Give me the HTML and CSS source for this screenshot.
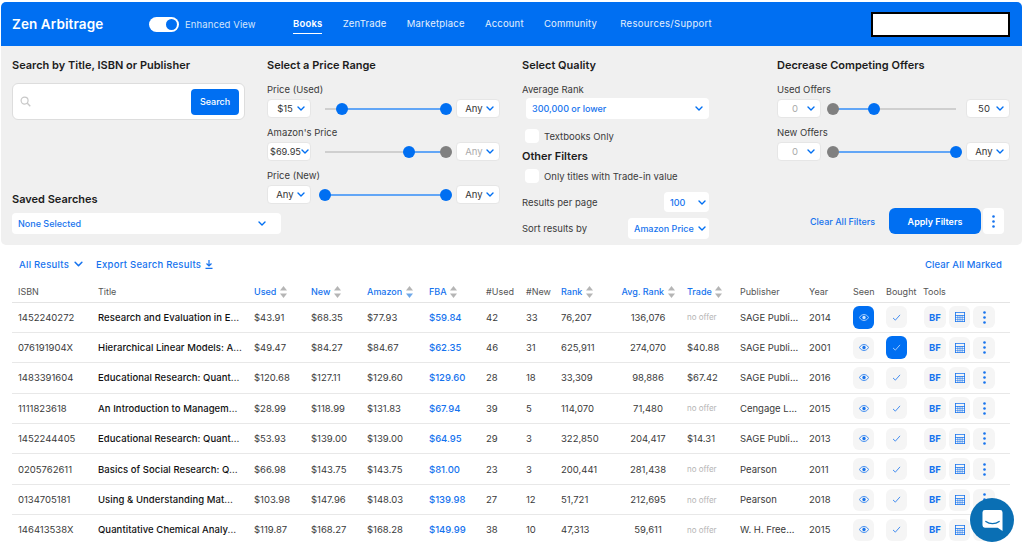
FILE: index.html
```html
<!DOCTYPE html>
<html lang="en">
<head>
<meta charset="utf-8">
<title>Zen Arbitrage</title>
<link rel="stylesheet" href="styles.css">
</head>
<body>
<svg class="defs" width="0" height="0" aria-hidden="true">
  <symbol id="chev" viewBox="0 0 8 5"><path d="M1 1l3 3 3-3" fill="none" stroke="currentColor" stroke-width="1.4" stroke-linecap="round" stroke-linejoin="round"/></symbol>
  <symbol id="eye" viewBox="0 0 12 8"><path d="M.5 4C2 1.600 3.800.5 6 .5S10 1.600 11.500 4C10 6.400 8.200 7.500 6 7.500S2 6.400.5 4z" fill="none" stroke="currentColor"/><circle cx="6" cy="4" r="2" fill="currentColor"/></symbol>
  <symbol id="check" viewBox="0 0 10 8"><path d="M1 4.500l2.700 2.500L9 1" fill="none" stroke="currentColor" stroke-width=".9"/></symbol>
  <symbol id="calc" viewBox="0 0 10 10"><path d="M0 0h10v10H0zM.8 .8v2.200h8.400V.8zM.8 3.800v1.400h1.800V3.800zM3.200 3.800v1.400h1.500V3.800zM5.300 3.800v1.400h1.500V3.800zM7.400 3.800v1.400h1.800V3.800zM.8 5.800v1.400h1.800V5.800zM3.200 5.800v1.400h1.500V5.800zM5.300 5.800v1.400h1.500V5.800zM7.400 5.800v1.400h1.800V5.800zM.8 7.800v1.400h1.800V7.800zM3.200 7.800v1.400h1.500V7.800zM5.300 7.800v1.400h1.500V7.800zM7.400 7.800v1.400h1.800V7.800z" fill="currentColor" fill-rule="evenodd"/></symbol>
  <symbol id="dots" viewBox="0 0 3 13"><circle cx="1.500" cy="1.500" r="1.300" fill="currentColor"/><circle cx="1.500" cy="6.500" r="1.300" fill="currentColor"/><circle cx="1.500" cy="11.500" r="1.300" fill="currentColor"/></symbol>
  <symbol id="sort" viewBox="0 0 7 12"><path d="M3.500 0L7 4.500H0z" fill="#b5b5b5"/><path d="M0 7.500h7L3.500 12z" fill="#b5b5b5"/></symbol>
  <symbol id="sort-down" viewBox="0 0 7 12"><path d="M3.500 0L7 4.500H0z" fill="#b5b5b5"/><path d="M0 7.500h7L3.500 12z" fill="#6fa8e8"/></symbol>
</svg>

<header class="topbar">
  <div class="logo">Zen Arbitrage</div>
  <div class="toggle"><span class="knob"></span></div>
  <span class="toggle-label">Enhanced View</span>
  <nav class="nav">
    <a class="nav-link active">Books</a>
    <a class="nav-link">ZenTrade</a>
    <a class="nav-link">Marketplace</a>
    <a class="nav-link">Account</a>
    <a class="nav-link">Community</a>
    <a class="nav-link nav-last">Resources/Support</a>
  </nav>
  <div class="user-box"></div>
</header>

<section class="filters">
  <div class="col col-search">
    <h2 class="heading">Search by Title, ISBN or Publisher</h2>
    <div class="search-box">
      <svg class="search-icon" viewBox="0 0 12 12"><circle cx="5" cy="5" r="3.800" fill="none" stroke="#c8c8c8" stroke-width="1.300"/><path d="M8 8l3.200 3.200" stroke="#c8c8c8" stroke-width="1.500"/></svg>
      <button class="search-btn">Search</button>
    </div>
    <h2 class="heading saved-heading">Saved Searches</h2>
    <div class="sel sel-blue sel-saved"><span>None Selected</span><svg class="chev"><use href="#chev"/></svg></div>
  </div>

  <div class="col">
    <h2 class="heading">Select a Price Range</h2>
    <div class="label first">Price (Used)</div>
    <div class="range">
      <div class="sel sel-small"><span>$15</span><svg class="chev"><use href="#chev"/></svg></div>
      <div class="slider"><div class="track"><div class="fill" style="left:14%;right:0"></div><i class="handle" style="left:14%"></i><i class="handle" style="left:100%"></i></div></div>
      <div class="sel sel-small"><span>Any</span><svg class="chev"><use href="#chev"/></svg></div>
    </div>
    <div class="label">Amazon's Price</div>
    <div class="range">
      <div class="sel sel-small sel-tight"><span>$69.95</span><svg class="chev"><use href="#chev"/></svg></div>
      <div class="slider"><div class="track"><div class="fill" style="left:69.500%;right:0"></div><i class="handle" style="left:69.500%"></i><i class="handle off" style="left:100%"></i></div></div>
      <div class="sel sel-small sel-muted"><span>Any</span><svg class="chev"><use href="#chev"/></svg></div>
    </div>
    <div class="label">Price (New)</div>
    <div class="range">
      <div class="sel sel-small"><span>Any</span><svg class="chev"><use href="#chev"/></svg></div>
      <div class="slider"><div class="track"><div class="fill" style="left:0;right:0"></div><i class="handle" style="left:0"></i><i class="handle" style="left:100%"></i></div></div>
      <div class="sel sel-small"><span>Any</span><svg class="chev"><use href="#chev"/></svg></div>
    </div>
  </div>

  <div class="col">
    <h2 class="heading">Select Quality</h2>
    <div class="label first">Average Rank</div>
    <div class="sel sel-blue sel-rank"><span>300,000 or lower</span><svg class="chev"><use href="#chev"/></svg></div>
    <label class="check check-text"><i class="box"></i>Textbooks Only</label>
    <h2 class="heading other-heading">Other Filters</h2>
    <label class="check check-trade"><i class="box"></i>Only titles with Trade-in value</label>
    <div class="opt opt-per">
      <span>Results per page</span>
      <div class="sel sel-blue sel-per"><span>100</span><svg class="chev"><use href="#chev"/></svg></div>
    </div>
    <div class="opt opt-sort">
      <span>Sort results by</span>
      <div class="sel sel-blue sel-sort"><span>Amazon Price</span><svg class="chev"><use href="#chev"/></svg></div>
    </div>
  </div>

  <div class="col col-offers">
    <h2 class="heading">Decrease Competing Offers</h2>
    <div class="label first">Used Offers</div>
    <div class="range">
      <div class="sel sel-small sel-muted"><span>0</span><svg class="chev"><use href="#chev"/></svg></div>
      <div class="slider slider-offers"><div class="track"><div class="fill" style="left:0;width:33%"></div><i class="handle off" style="left:0"></i><i class="handle" style="left:33%"></i></div></div>
      <div class="sel sel-small"><span>50</span><svg class="chev"><use href="#chev"/></svg></div>
    </div>
    <div class="label">New Offers</div>
    <div class="range">
      <div class="sel sel-small sel-muted"><span>0</span><svg class="chev"><use href="#chev"/></svg></div>
      <div class="slider slider-offers"><div class="track"><div class="fill" style="left:0;right:0"></div><i class="handle off" style="left:0"></i><i class="handle" style="left:100%"></i></div></div>
      <div class="sel sel-small"><span>Any</span><svg class="chev"><use href="#chev"/></svg></div>
    </div>
    <div class="actions">
      <a class="clear-filters">Clear All Filters</a>
      <button class="apply">Apply Filters</button>
      <button class="more"><svg class="dots"><use href="#dots"/></svg></button>
    </div>
  </div>
</section>

<section class="results">
  <div class="results-bar">
    <a class="link all-results">All Results <svg class="chev-lg"><use href="#chev"/></svg></a>
    <a class="link">Export Search Results
      <svg class="download" viewBox="0 0 8 9"><path d="M4 0v5.500M1.500 3.500L4 6l2.500-2.500M.5 8.300h7" fill="none" stroke="currentColor" stroke-width="1.200"/></svg></a>
    <a class="link clear-marked">Clear All Marked</a>
  </div>
  <table class="grid">
    <colgroup>
      <col class="c-isbn"><col class="c-title"><col class="c-used"><col class="c-new"><col class="c-amz"><col class="c-fba"><col class="c-nu"><col class="c-nn"><col class="c-rank"><col class="c-avg"><col class="c-trade"><col class="c-pub"><col class="c-year"><col class="c-seen"><col class="c-bought"><col class="c-tools">
    </colgroup>
    <thead>
      <tr>
        <th>ISBN</th><th>Title</th>
        <th class="sortable">Used <svg class="sort"><use href="#sort"/></svg></th>
        <th class="sortable">New <svg class="sort"><use href="#sort"/></svg></th>
        <th class="sortable">Amazon <svg class="sort"><use href="#sort-down"/></svg></th>
        <th class="sortable">FBA <svg class="sort"><use href="#sort"/></svg></th>
        <th>#Used</th><th>#New</th>
        <th class="sortable">Rank <svg class="sort"><use href="#sort"/></svg></th>
        <th class="sortable center">Avg. Rank <svg class="sort"><use href="#sort"/></svg></th>
        <th class="sortable">Trade <svg class="sort"><use href="#sort"/></svg></th>
        <th>Publisher</th><th>Year</th><th>Seen</th><th>Bought</th><th>Tools</th>
      </tr>
    </thead>
    <tbody>
      <tr><td>1452240272</td><td class="title">Research and Evaluation in E…</td><td>$43.91</td><td>$68.35</td><td>$77.93</td><td class="fba">$59.84</td><td>42</td><td>33</td><td>76,207</td><td class="center">136,076</td><td class="none">no offer</td><td>SAGE Publi…</td><td>2014</td>
        <td><span class="ib on tall"><svg class="i-eye"><use href="#eye"/></svg></span></td><td><span class="ib"><svg class="i-check"><use href="#check"/></svg></span></td><td class="tools"><span class="ib bf">BF</span><span class="ib"><svg class="i-calc"><use href="#calc"/></svg></span><span class="ib ib-dots"><svg class="dots"><use href="#dots"/></svg></span></td></tr>
      <tr><td>076191904X</td><td class="title">Hierarchical Linear Models: A…</td><td>$49.47</td><td>$84.27</td><td>$84.67</td><td class="fba">$62.35</td><td>46</td><td>31</td><td>625,911</td><td class="center">274,070</td><td>$40.88</td><td>SAGE Publi…</td><td>2001</td>
        <td><span class="ib"><svg class="i-eye"><use href="#eye"/></svg></span></td><td><span class="ib on tall"><svg class="i-check"><use href="#check"/></svg></span></td><td class="tools"><span class="ib bf">BF</span><span class="ib"><svg class="i-calc"><use href="#calc"/></svg></span><span class="ib ib-dots"><svg class="dots"><use href="#dots"/></svg></span></td></tr>
      <tr><td>1483391604</td><td class="title">Educational Research: Quant…</td><td>$120.68</td><td>$127.11</td><td>$129.60</td><td class="fba">$129.60</td><td>28</td><td>18</td><td>33,309</td><td class="center">98,886</td><td>$67.42</td><td>SAGE Publi…</td><td>2016</td>
        <td><span class="ib"><svg class="i-eye"><use href="#eye"/></svg></span></td><td><span class="ib"><svg class="i-check"><use href="#check"/></svg></span></td><td class="tools"><span class="ib bf">BF</span><span class="ib"><svg class="i-calc"><use href="#calc"/></svg></span><span class="ib ib-dots"><svg class="dots"><use href="#dots"/></svg></span></td></tr>
      <tr><td>1111823618</td><td class="title">An Introduction to Managem…</td><td>$28.99</td><td>$118.99</td><td>$131.83</td><td class="fba">$67.94</td><td>39</td><td>5</td><td>114,070</td><td class="center">71,480</td><td class="none">no offer</td><td>Cengage L…</td><td>2015</td>
        <td><span class="ib"><svg class="i-eye"><use href="#eye"/></svg></span></td><td><span class="ib"><svg class="i-check"><use href="#check"/></svg></span></td><td class="tools"><span class="ib bf">BF</span><span class="ib"><svg class="i-calc"><use href="#calc"/></svg></span><span class="ib ib-dots"><svg class="dots"><use href="#dots"/></svg></span></td></tr>
      <tr><td>1452244405</td><td class="title">Educational Research: Quant…</td><td>$53.93</td><td>$139.00</td><td>$139.00</td><td class="fba">$64.95</td><td>29</td><td>3</td><td>322,850</td><td class="center">204,417</td><td>$14.31</td><td>SAGE Publi…</td><td>2013</td>
        <td><span class="ib"><svg class="i-eye"><use href="#eye"/></svg></span></td><td><span class="ib"><svg class="i-check"><use href="#check"/></svg></span></td><td class="tools"><span class="ib bf">BF</span><span class="ib"><svg class="i-calc"><use href="#calc"/></svg></span><span class="ib ib-dots"><svg class="dots"><use href="#dots"/></svg></span></td></tr>
      <tr><td>0205762611</td><td class="title">Basics of Social Research: Q…</td><td>$66.98</td><td>$143.75</td><td>$143.75</td><td class="fba">$81.00</td><td>23</td><td>3</td><td>200,441</td><td class="center">281,438</td><td class="none">no offer</td><td>Pearson</td><td>2011</td>
        <td><span class="ib"><svg class="i-eye"><use href="#eye"/></svg></span></td><td><span class="ib"><svg class="i-check"><use href="#check"/></svg></span></td><td class="tools"><span class="ib bf">BF</span><span class="ib"><svg class="i-calc"><use href="#calc"/></svg></span><span class="ib ib-dots"><svg class="dots"><use href="#dots"/></svg></span></td></tr>
      <tr><td>0134705181</td><td class="title">Using &amp; Understanding Mat…</td><td>$103.98</td><td>$147.96</td><td>$148.03</td><td class="fba">$139.98</td><td>27</td><td>12</td><td>51,721</td><td class="center">212,695</td><td class="none">no offer</td><td>Pearson</td><td>2018</td>
        <td><span class="ib"><svg class="i-eye"><use href="#eye"/></svg></span></td><td><span class="ib"><svg class="i-check"><use href="#check"/></svg></span></td><td class="tools"><span class="ib bf">BF</span><span class="ib"><svg class="i-calc"><use href="#calc"/></svg></span><span class="ib ib-dots"><svg class="dots"><use href="#dots"/></svg></span></td></tr>
      <tr><td>146413538X</td><td class="title">Quantitative Chemical Analy…</td><td>$119.87</td><td>$168.27</td><td>$168.28</td><td class="fba">$149.99</td><td>38</td><td>10</td><td>47,313</td><td class="center">59,611</td><td class="none">no offer</td><td>W. H. Free…</td><td>2015</td>
        <td><span class="ib"><svg class="i-eye"><use href="#eye"/></svg></span></td><td><span class="ib"><svg class="i-check"><use href="#check"/></svg></span></td><td class="tools"><span class="ib bf">BF</span><span class="ib"><svg class="i-calc"><use href="#calc"/></svg></span><span class="ib ib-dots"><svg class="dots"><use href="#dots"/></svg></span></td></tr>
    </tbody>
  </table>
</section>

<button class="chat" aria-label="Chat">
  <svg viewBox="0 0 22 24" width="21" height="23"><path d="M3 1h16a2.500 2.500 0 0 1 2.500 2.500V23l-5-3.500H3A2.500 2.500 0 0 1 .5 17V3.500A2.500 2.500 0 0 1 3 1z" fill="#fff"/><path d="M4 13c4 3 10 3 14 0" fill="none" stroke="#0a6fb4" stroke-width="1.300" stroke-linecap="round"/></svg>
</button>
</body>
</html>
```
FILE: styles.css
```css
* { box-sizing: border-box; }
html, body { height: 545px; overflow: hidden; }
body {
  margin: 0;
  background: #fff;
  color: #2a2a2a;
  font-family: Inter, "Liberation Sans", sans-serif;
  font-size: 9.5px;
  position: relative;
}
.defs { position: absolute; }
button { font-family: inherit; border: 0; cursor: pointer; }

/* top bar */
.topbar {
  height: 44px;
  margin: 2px 2px 0 1px;
  background: #006ff2;
  border-radius: 5px 5px 0 0;
  display: flex;
  align-items: center;
  padding: 0 11px;
  color: #fff;
}
.logo { font-size: 13.5px; font-weight: 600; width: 137px; letter-spacing: .1px; }
.toggle {
  width: 30px; height: 15px; border-radius: 8px; background: #fff;
  display: flex; align-items: center; justify-content: flex-end; padding-right: 2px;
}
.knob { width: 11px; height: 11px; border-radius: 50%; background: #006ff2; }
.toggle-label { margin-left: 6px; width: 108px; color: #d3e5fc; font-size: 9.5px; letter-spacing: .1px; }
.nav { display: flex; gap: 20.2px; flex: 1; }
.nav-link { color: #e4effd; font-size: 9.5px; padding: 4px 0; border-bottom: 1px solid transparent; letter-spacing: .2px; }
.nav-link.active { color: #fff; font-weight: 600; border-bottom-color: #fff; }
.nav-last { margin-left: 3px; letter-spacing: .3px; }
.user-box { width: 139px; height: 25px; background: #fff; border: 2px solid #000; margin-right: 1px; }

/* filters */
.filters {
  height: 199px;
  margin: 0 2px 0 1px;
  background: #f0f0f0;
  border-radius: 0 0 5px 5px;
  padding: 12px 0 0 11px;
  display: grid;
  grid-template-columns: repeat(4, 255px);
}
.col { display: flex; flex-direction: column; }
.heading { margin: 0; font-size: 11px; font-weight: 600; line-height: 14px; color: #1c1c1c; }
.search-box {
  margin-top: 11px; width: 233px; height: 37px;
  background: #fff; border: 1px solid #ddd; border-radius: 6px;
  display: flex; align-items: center; justify-content: space-between;
  padding: 0 5px 0 7px;
}
.search-icon { width: 11px; height: 11px; }
.search-btn { width: 48px; height: 26px; background: #006ff2; color: #fff; border-radius: 4px; font-size: 9px; font-weight: 500; }
.saved-heading { margin-top: 72px; }
.sel {
  background: #fff; border-radius: 4px;
  display: flex; align-items: center; justify-content: space-between;
  white-space: nowrap;
}
.chev { width: 8px; height: 5px; color: #006ff2; flex: none; }
.sel-blue { color: #1673ee; font-weight: 500; font-size: 9px; }
.sel-saved { margin-top: 7px; width: 269px; height: 21px; padding: 0 15px 0 6px; }
.label { margin-top: 8px; font-size: 9.5px; line-height: 13px; color: #3b3b3b; height: 13px; }
.label.first { margin-top: 11px; }
.range { margin-top: 3px; display: grid; grid-template-columns: 44px 1fr 44px; height: 19px; align-items: stretch; width: 233px; }
.sel-small { border: 1px solid #e6e6e6; padding: 0 5px 0 5px; font-size: 9.5px; color: #333; }
.sel-small > span { flex: 1; text-align: center; }
.sel-tight { padding: 0 3px 0 2px; font-size: 9.2px; }
.sel-muted { color: #aaa; }
.slider { display: flex; align-items: center; padding: 0 10px 0 14px; }
.slider-offers { padding: 0 10px 0 12px; }
.track { position: relative; flex: 1; height: 2px; background: #cfcfcf; }
.fill { position: absolute; top: 0; bottom: 0; background: #62a6f6; }
.handle {
  position: absolute; top: 50%; width: 12px; height: 12px; margin: -6px 0 0 -6px;
  border-radius: 50%; background: #006ff2;
}
.handle.off { background: #808080; }

.sel-rank { margin: 2px 0 0 4px; width: 183px; height: 21px; padding: 0 6px; }
.check { display: flex; align-items: center; gap: 5px; font-size: 9.5px; color: #3b3b3b; margin-left: 3px; }
.box { width: 14px; height: 14px; background: #fff; border-radius: 4px; flex: none; }
.check-text { margin-top: 10px; }
.other-heading { margin-top: 6px; }
.check-trade { margin-top: 6px; }
.opt { display: flex; align-items: center; justify-content: space-between; width: 187px; font-size: 9.5px; color: #3b3b3b; }
.opt-per { margin-top: 9px; }
.opt-sort { margin-top: 6px; }
.sel-per { width: 45px; height: 20px; padding: 0 3px 0 6px; }
.sel-sort { width: 81px; height: 21px; padding: 0 3px 0 6px; }
.actions { margin-top: auto; margin-bottom: 11px; width: 227px; display: flex; align-items: center; }
.clear-filters { margin-left: 33px; width: 79px; color: #1673ee; font-size: 9px; font-weight: 500; white-space: nowrap; }
.apply { width: 92px; height: 26px; background: #006ff2; color: #fff; font-size: 9px; font-weight: 600; border-radius: 6px; }
.more { width: 21px; height: 26px; margin-left: 2px; background: #fff; border-radius: 4px; display: flex; align-items: center; justify-content: center; color: #006ff2; }
.dots { width: 3px; height: 13px; color: #1673ee; }

/* results */
.results { padding: 0 14px 0 12px; }
.results-bar { height: 38px; margin-bottom: 2px; display: flex; align-items: center; gap: 13px; padding: 0 0 0 7px; }
.link { color: #1673ee; font-size: 9.5px; font-weight: 500; letter-spacing: .25px; display: flex; align-items: center; gap: 4px; white-space: nowrap; }
.chev-lg { width: 9px; height: 6px; margin-left: 1px; }
.download { width: 8px; height: 9px; }
.clear-marked { margin-left: auto; margin-right: 8px; letter-spacing: .12px; }

.grid { width: 998px; table-layout: fixed; border-collapse: collapse; }
.c-isbn { width: 80px; } .c-title { width: 156px; } .c-used { width: 57px; } .c-new { width: 56px; }
.c-amz { width: 62px; } .c-fba { width: 57px; } .c-nu { width: 40px; } .c-nn { width: 35px; }
.c-rank { width: 60px; } .c-avg { width: 66px; } .c-trade { width: 53px; } .c-pub { width: 69px; }
.c-year { width: 44px; } .c-seen { width: 33px; } .c-bought { width: 37px; } .c-tools { width: 93px; }
.grid th, .grid td { padding: 0 0 0 6px; text-align: left; white-space: nowrap; overflow: hidden; }
.grid th { height: 17px; font-size: 9px; font-weight: 400; color: #555; border-bottom: 1px solid #e4e4e4; vertical-align: top; line-height: 14px; }
.grid td { height: 30.400px; font-size: 9.500px; color: #3a3a3a; border-bottom: 1px solid #e8e8e8; }
.grid th.sortable { color: #1673ee; font-weight: 500; }
.sort { width: 7px; height: 12px; vertical-align: -3px; margin-left: 1px; }
.grid .center { text-align: center; padding-right: 6px; }
.grid .title { font-weight: 500; color: #111; letter-spacing: .07px; }
.grid .fba { color: #1673ee; font-weight: 500; }
.grid .none { color: #b5b5b5; font-size: 8px; }
.ib {
  width: 21px; height: 22px; border-radius: 6px; background: #f5f5f5; color: #1673ee;
  display: inline-flex; align-items: center; justify-content: center; vertical-align: middle;
}
.ib.on { background: #006ff2; color: #cfe3fb; }
.ib.tall { height: 23px; }
.i-eye { width: 10px; height: 7px; }
.i-check { width: 9px; height: 7px; }
.i-calc { width: 10px; height: 10px; }
.grid td.tools { font-size: 0; padding-left: 7px; }
.tools .ib { margin-right: 3px; }
.ib.bf { font-size: 9.500px; font-weight: 700; width: 22px; }
.ib.ib-dots { width: 22px; }

/* chat launcher */
.chat {
  position: fixed; left: 970px; top: 498px; width: 44px; height: 44px; border-radius: 50%;
  background: #0a6fb4; display: flex; align-items: center; justify-content: center; padding: 0;
}
```
